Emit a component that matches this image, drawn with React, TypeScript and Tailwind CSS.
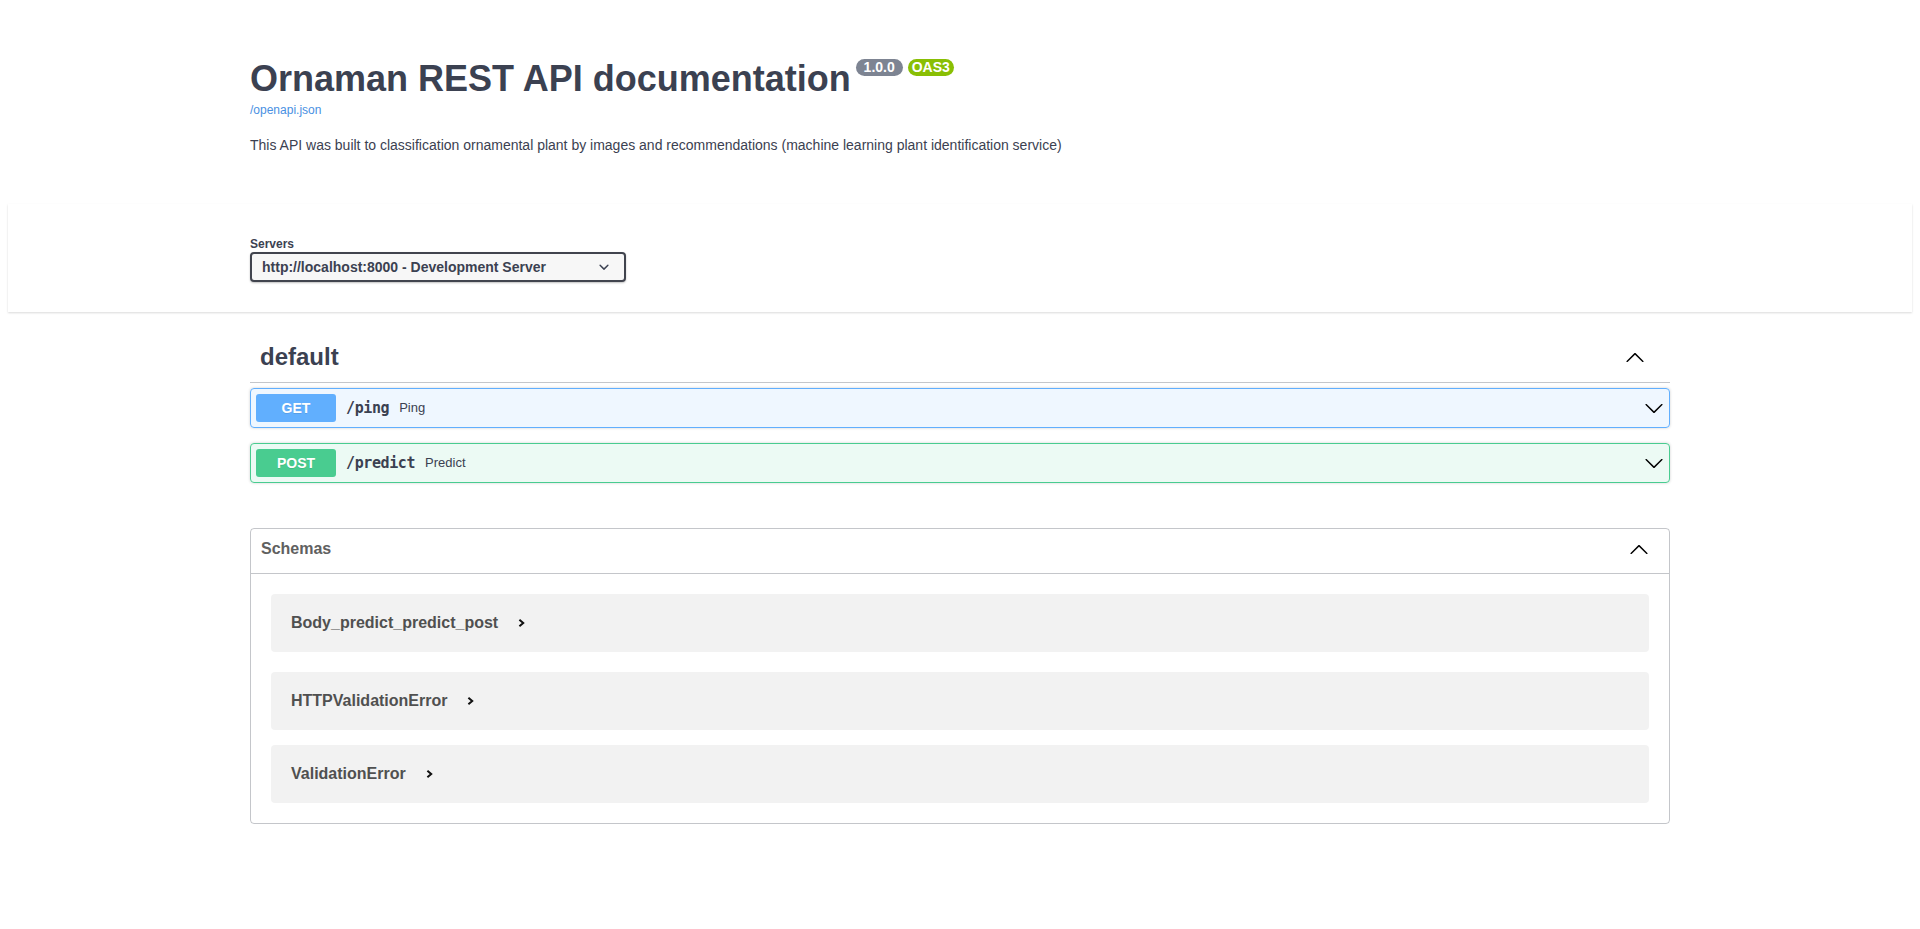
import React from 'react';

const ArrowUp = ({ className }: { className?: string }) => (
  <svg viewBox="0 0 20 20" className={className} fill="currentColor" aria-hidden="true">
    <path d="M17.418 14.908c.272.268.709.268.979 0s.271-.701 0-.969l-7.908-7.83c-.27-.268-.707-.268-.979 0l-7.908 7.83c-.27.268-.27.701 0 .969.271.268.709.268.979 0L10 7.767l7.418 7.141z" />
  </svg>
);

const ArrowDown = ({ className }: { className?: string }) => (
  <svg viewBox="0 0 20 20" className={className} fill="currentColor" aria-hidden="true">
    <path d="M17.418 6.109c.272-.268.709-.268.979 0s.271.701 0 .969l-7.908 7.83c-.27.268-.707.268-.979 0l-7.908-7.83c-.27-.268-.27-.701 0-.969.271-.268.709-.268.979 0L10 13.25l7.418-7.141z" />
  </svg>
);

const SelectArrow = () => (
  <svg viewBox="0 0 20 20" className="h-5 w-5 shrink-0" fill="#3b4151" aria-hidden="true">
    <path d="M13.418 7.859a.695.695 0 01.978 0 .68.68 0 010 .969l-3.908 3.83a.697.697 0 01-.979 0l-3.908-3.83a.68.68 0 010-.969.695.695 0 01.978 0L10 11l3.418-3.141z" />
  </svg>
);

const ModelChevron = () => (
  <svg viewBox="0 0 7 8" className="ml-[20px] h-[8px] w-[7px]" aria-hidden="true">
    <polyline points="1.4,0.8 5.2,4 1.4,7.2" fill="none" stroke="#111" strokeWidth="2" />
  </svg>
);

const operations = [
  {
    method: 'GET',
    path: '/ping',
    summary: 'Ping',
    box: 'border-[#61affe] bg-[rgba(97,175,254,0.1)]',
    badge: 'bg-[#61affe]',
  },
  {
    method: 'POST',
    path: '/predict',
    summary: 'Predict',
    box: 'border-[#49cc90] bg-[rgba(73,204,144,0.1)]',
    badge: 'bg-[#49cc90]',
  },
];

const models = [
  { name: 'Body_predict_predict_post', gap: 'mt-5' },
  { name: 'HTTPValidationError', gap: 'mt-5' },
  { name: 'ValidationError', gap: 'mt-[15px]' },
];

export default function App() {
  return (
    <div className="min-h-screen bg-white px-2 pb-2 font-['Liberation_Sans',Arial,sans-serif] text-[#3b4151]">
      {/* Info */}
      <div className="mx-auto max-w-[1460px] px-5 pt-[58px]">
        <div className="flex items-start">
          <h2 className="text-[36px] font-bold leading-[41px]">Ornaman REST API documentation</h2>
          <div className="ml-[5px] mt-px flex gap-[5px]">
            <span className="whitespace-pre rounded-full bg-[#7d8492] px-1 py-[2px] text-[14px] font-bold leading-[13px] text-white">
              {' 1.0.0 '}
            </span>
            <span className="rounded-full bg-[#89bf04] px-1 py-[2px] text-[14px] font-bold leading-[13px] text-white">
              OAS3
            </span>
          </div>
        </div>
        <a href="#" className="mt-[4px] block w-fit text-[12px] leading-[14px] text-[#4990e2]">
          /openapi.json
        </a>
        <p className="mt-5 text-[14px] leading-[16px]">
          This API was built to classification ornamental plant by images and recommendations (machine learning plant identification service)
        </p>
      </div>

      {/* Servers */}
      <div className="mt-[51px] bg-white shadow-[0_1px_2px_0_rgba(0,0,0,0.15)]">
        <div className="mx-auto max-w-[1460px] px-5 pb-[30px] pt-[33px]">
          <span className="block text-[12px] font-bold leading-[14px]">Servers</span>
          <div className="mt-px flex h-[30px] w-[376px] items-center justify-between rounded border-2 border-[#41444e] bg-[#f7f7f7] pl-[10px] pr-[10px] text-[14px] font-bold shadow-[0_1px_2px_0_rgba(0,0,0,0.25)]">
            <span>http://localhost:8000 - Development Server</span>
            <SelectArrow />
          </div>
        </div>
      </div>

      {/* Operations */}
      <div className="mx-auto max-w-[1460px] px-5 pt-5">
        <div className="flex h-[51px] items-center border-b border-[rgba(59,65,81,0.3)] pl-[10px] pr-[25px]">
          <h3 className="text-[24px] font-bold leading-[28px]">default</h3>
          <ArrowUp className="ml-auto h-5 w-5 text-black" />
        </div>

        <div className="mt-[5px] flex flex-col gap-[15px]">
          {operations.map((op) => (
            <div
              key={op.path}
              className={`flex h-[40px] items-center rounded border p-[5px] shadow-[0_0_3px_rgba(0,0,0,0.19)] ${op.box}`}
            >
              <span
                className={`flex h-[28px] w-[80px] shrink-0 items-center justify-center rounded-[3px] text-[14px] font-bold text-white [text-shadow:0_1px_0_rgba(0,0,0,0.1)] ${op.badge}`}
              >
                {op.method}
              </span>
              <span className="px-[10px] font-['DejaVu_Sans_Mono',monospace] text-[15px] font-bold tracking-[-0.4px]">
                {op.path}
              </span>
              <span className="text-[13px]">{op.summary}</span>
              <ArrowDown className="ml-auto h-5 w-5 text-black" />
            </div>
          ))}
        </div>

        {/* Schemas */}
        <div className="mt-[45px] rounded border border-[rgba(59,65,81,0.3)] pb-5">
          <div className="flex h-[45px] items-center border-b border-[rgba(59,65,81,0.3)] pb-[4px] pl-[10px] pr-5 text-[16px] font-bold text-[#606060]">
            <span>Schemas</span>
            <ArrowUp className="ml-auto h-5 w-5 text-black" />
          </div>
          <div className="mx-5 flex flex-col">
            {models.map((m) => (
              <div
                key={m.name}
                className={`flex h-[58px] items-center rounded bg-black/5 pl-5 text-[16px] font-bold text-[#505050] ${m.gap}`}
              >
                <span>{m.name}</span>
                <ModelChevron />
              </div>
            ))}
          </div>
        </div>
      </div>
    </div>
  );
}
